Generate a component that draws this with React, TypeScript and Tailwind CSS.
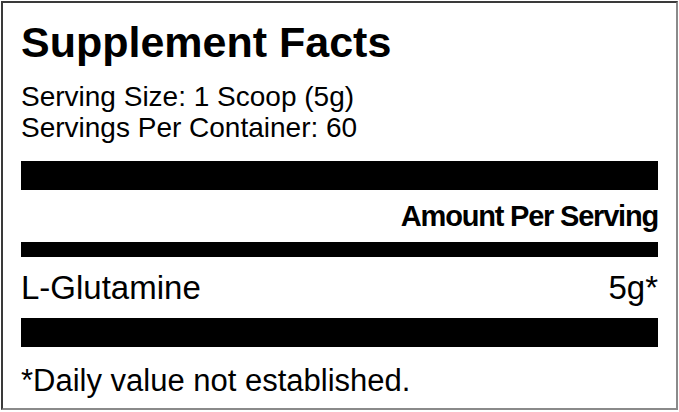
export default function App() {
  return (
    <div className="w-[679px] h-[412px] bg-white" style={{ fontFamily: '"Liberation Sans", Arial, sans-serif' }}>
      <div className="ml-[1px] mt-[1px] w-[677px] h-[409px] border-2 border-[#3a3a3a] border-r-[#8a8a8a] border-b-[#8a8a8a] px-[18px] text-black">
        <h1 className="mt-[18px] text-[43px] font-bold leading-none">Supplement Facts</h1>
        <div className="mt-[17px] text-[28px] leading-[31px]">
          <p>Serving Size: 1 Scoop (5g)</p>
          <p>Servings Per Container: 60</p>
        </div>
        <div className="mt-[18px] h-[29px] bg-black" />
        <p className="mt-[12px] text-right text-[29px] font-bold leading-none tracking-[-1.2px]">Amount Per Serving</p>
        <div className="mt-[11px] h-[15px] bg-black" />
        <div className="mt-[14px] flex justify-between text-[33px] leading-none">
          <span>L-Glutamine</span>
          <span>5g*</span>
        </div>
        <div className="mt-[14px] h-[29px] bg-black" />
        <p className="mt-[18px] text-[31px] leading-none">*Daily value not established.</p>
      </div>
    </div>
  );
}
